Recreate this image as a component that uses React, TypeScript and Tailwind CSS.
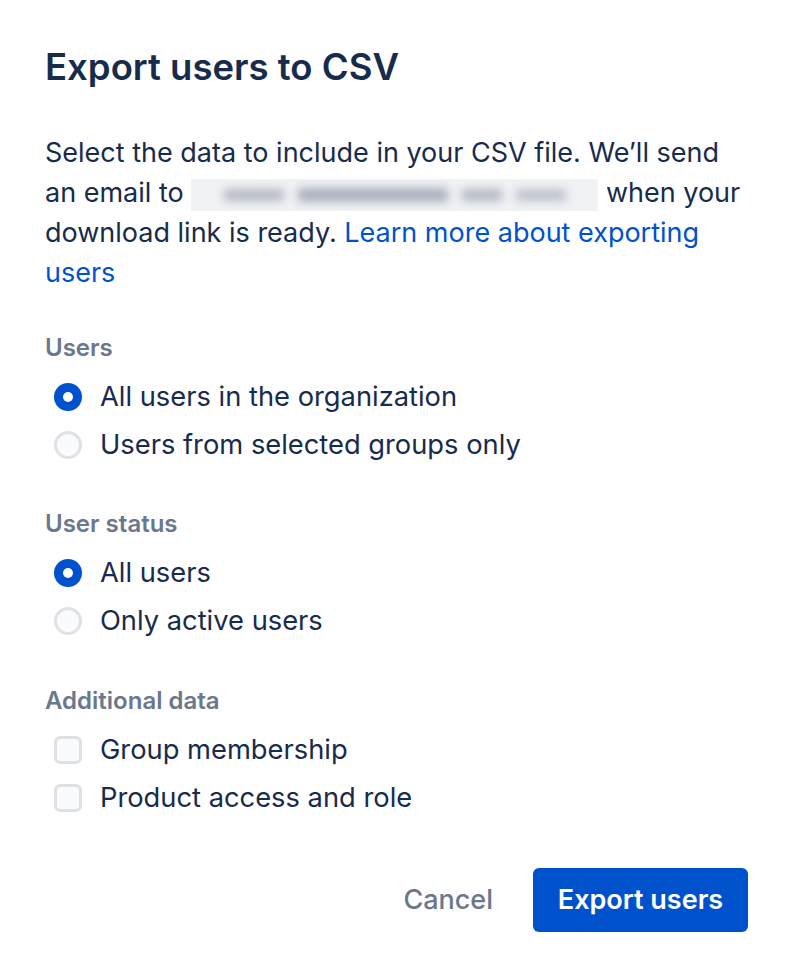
import React, { useState } from 'react';

type Option = { id: string; label: string };

function Radio({ checked, label, onSelect }: { checked: boolean; label: string; onSelect: () => void }) {
  return (
    <label className="flex items-center h-[48px] cursor-pointer" onClick={onSelect}>
      <span className="ml-[9px] mr-[18px] flex">
        {checked ? (
          <span className="w-[28px] h-[28px] rounded-full bg-[#0052CC] flex items-center justify-center">
            <span className="w-[10px] h-[10px] rounded-full bg-white" />
          </span>
        ) : (
          <span className="w-[28px] h-[28px] rounded-full bg-[#FAFBFC] border-[3px] border-[#DFE1E6]" />
        )}
      </span>
      <span className="text-[27.3px] text-[#172B4D]">{label}</span>
    </label>
  );
}

function Checkbox({ checked, label, onToggle }: { checked: boolean; label: string; onToggle: () => void }) {
  return (
    <label className="flex items-center h-[48px] cursor-pointer" onClick={onToggle}>
      <span className="ml-[9px] mr-[18px] flex">
        <span
          className={`w-[28px] h-[28px] rounded-[6px] border-[3px] ${
            checked ? 'bg-[#0052CC] border-[#0052CC]' : 'bg-[#FAFBFC] border-[#DFE1E6]'
          }`}
        />
      </span>
      <span className="text-[27.3px] text-[#172B4D]">{label}</span>
    </label>
  );
}

const userOptions: Option[] = [
  { id: 'all', label: 'All users in the organization' },
  { id: 'groups', label: 'Users from selected groups only' },
];

const statusOptions: Option[] = [
  { id: 'all', label: 'All users' },
  { id: 'active', label: 'Only active users' },
];

function SectionLabel({ children }: { children: React.ReactNode }) {
  return <div className="text-[24px] leading-[36px] font-semibold text-[#6B778C]">{children}</div>;
}

export default function App() {
  const [users, setUsers] = useState('all');
  const [status, setStatus] = useState('all');
  const [groups, setGroups] = useState(false);
  const [access, setAccess] = useState(false);

  return (
    <div className="w-[792px] h-[976px] bg-white font-['Inter',sans-serif] pl-[45px] pr-[42px] pt-[42px]">
      <h1 className="text-[36.5px] leading-[50px] font-semibold text-[#172B4D]">Export users to CSV</h1>

      <p className="mt-[41px] text-[27px] leading-[40px] text-[#172B4D]">
        Select the data to include in your CSV file. We’ll send an email to{' '}
        <span className="inline-block align-middle w-[407px] h-[32px] bg-[#F1F2F4] overflow-hidden relative">
          <span className="absolute inset-0 flex items-center justify-center gap-[14px] blur-[5px]">
            <span className="w-[60px] h-[12px] bg-[#B3B8C4]" />
            <span className="w-[150px] h-[14px] bg-[#A9AFBC]" />
            <span className="w-[40px] h-[12px] bg-[#B3B8C4]" />
            <span className="w-[50px] h-[12px] bg-[#BCC1CB]" />
          </span>
        </span>{' '}
        when your download link is ready.{' '}
        <a href="#" className="text-[#0052CC]">Learn more about exporting users</a>
      </p>

      <section className="mt-[37px]">
        <SectionLabel>Users</SectionLabel>
        <div className="mt-[7px]">
          {userOptions.map((o) => (
            <Radio key={o.id} checked={users === o.id} label={o.label} onSelect={() => setUsers(o.id)} />
          ))}
        </div>
      </section>

      <section className="mt-[37px]">
        <SectionLabel>User status</SectionLabel>
        <div className="mt-[7px]">
          {statusOptions.map((o) => (
            <Radio key={o.id} checked={status === o.id} label={o.label} onSelect={() => setStatus(o.id)} />
          ))}
        </div>
      </section>

      <section className="mt-[38px]">
        <SectionLabel>Additional data</SectionLabel>
        <div className="mt-[7px]">
          <Checkbox checked={groups} label="Group membership" onToggle={() => setGroups(!groups)} />
          <Checkbox checked={access} label="Product access and role" onToggle={() => setAccess(!access)} />
        </div>
      </section>

      <div className="mt-[46px] flex justify-end items-center gap-[4px] pr-[2px]">
        <button className="h-[64px] px-[36px] text-[27px] font-medium text-[#6B778C]">Cancel</button>
        <button className="h-[64px] rounded-[6px] bg-[#0052CC] text-[27px] font-semibold text-white w-[215px]">
          Export users
        </button>
      </div>
    </div>
  );
}
